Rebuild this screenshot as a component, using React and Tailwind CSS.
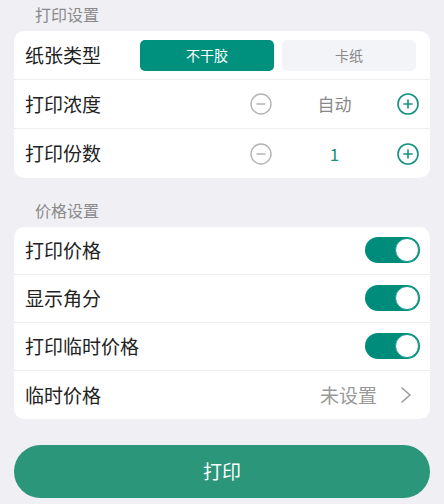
import React, { useState } from "react";

const font = { fontFamily: '"Noto Sans CJK SC", "Noto Sans", sans-serif' };

const MinusIcon = () => (
  <svg width="22" height="22" viewBox="0 0 22 22">
    <circle cx="11" cy="11" r="10" fill="none" stroke="#b3b3b3" strokeWidth="1.4" />
    <line x1="7" y1="11" x2="15" y2="11" stroke="#b3b3b3" strokeWidth="1.4" strokeLinecap="round" />
  </svg>
);

const PlusIcon = () => (
  <svg width="22" height="22" viewBox="0 0 22 22">
    <circle cx="11" cy="11" r="10" fill="none" stroke="#14917f" strokeWidth="1.6" />
    <line x1="7" y1="11" x2="15" y2="11" stroke="#14917f" strokeWidth="1.6" strokeLinecap="round" />
    <line x1="11" y1="7" x2="11" y2="15" stroke="#14917f" strokeWidth="1.6" strokeLinecap="round" />
  </svg>
);

const Toggle = ({ on, onClick }) => (
  <button
    onClick={onClick}
    className={`relative w-[55px] h-[26px] rounded-full -mt-[2px] ${on ? "bg-[#008c7a]" : "bg-[#dcdce0]"}`}
  >
    <span
      className={`absolute top-[1px] w-[24px] h-[24px] rounded-full bg-white border border-[#1a9a88] ${on ? "right-[1px]" : "left-[1px]"}`}
    />
  </button>
);

const Row = ({ label, children, last, tall }) => (
  <div
    className={`flex items-center ${tall ? "h-[49px]" : "h-[48px]"} pl-[11px] pr-[10px] ${last ? "" : "border-b border-[#eeeef2]"}`}
  >
    <span className="text-[19px] text-[#222]">{label}</span>
    <div className="flex-1 flex items-center justify-end">{children}</div>
  </div>
);

const Stepper = ({ value, accent }) => (
  <div className="flex items-center mr-[1px]">
    <MinusIcon />
    <span className={`w-[125px] text-center text-[17px] ${accent ? "text-[#14917f]" : "text-[#888]"}`}>{value}</span>
    <PlusIcon />
  </div>
);

export default function App() {
  const [paper, setPaper] = useState(0);
  const [toggles, setToggles] = useState([true, true, true]);
  const flip = (i) => setToggles((t) => t.map((v, j) => (j === i ? !v : v)));

  return (
    <div className="w-[444px] h-[504px] bg-[#efeff4] px-[14px] overflow-hidden" style={font}>
      <div className="pl-[21px] pt-[2px] h-[31px] text-[16px] text-[#8a8a8a]">打印设置</div>
      <div className="bg-white rounded-[10px]">
        <Row label="纸张类型" tall>
          <div className="flex gap-[8px] mr-[4px]">
            {["不干胶", "卡纸"].map((t, i) => (
              <button
                key={t}
                onClick={() => setPaper(i)}
                className={`w-[134px] h-[31px] rounded-[5px] text-[14px] ${paper === i ? "bg-[#00907e] text-white" : "bg-[#f2f4f8] text-[#888]"}`}
              >
                {t}
              </button>
            ))}
          </div>
        </Row>
        <Row label="打印浓度" tall>
          <Stepper value="自动" />
        </Row>
        <Row label="打印份数" last tall>
          <Stepper value="1" accent />
        </Row>
      </div>

      <div className="pl-[21px] pt-[20px] h-[49px] text-[16px] text-[#8a8a8a]">价格设置</div>
      <div className="bg-white rounded-[10px]">
        <Row label="打印价格">
          <Toggle on={toggles[0]} onClick={() => flip(0)} />
        </Row>
        <Row label="显示角分">
          <Toggle on={toggles[1]} onClick={() => flip(1)} />
        </Row>
        <Row label="打印临时价格">
          <Toggle on={toggles[2]} onClick={() => flip(2)} />
        </Row>
        <Row label="临时价格" last>
          <span className="text-[19px] text-[#999] mr-[23px]">未设置</span>
          <svg width="12" height="18" viewBox="0 0 12 18" className="mr-[8px]">
            <polyline points="2,2 10,9 2,16" fill="none" stroke="#999" strokeWidth="1.6" strokeLinecap="round" strokeLinejoin="round" />
          </svg>
        </Row>
      </div>

      <button className="mt-[26px] w-full h-[53px] rounded-full bg-[#2b9679] text-white text-[19px]">打印</button>
    </div>
  );
}
